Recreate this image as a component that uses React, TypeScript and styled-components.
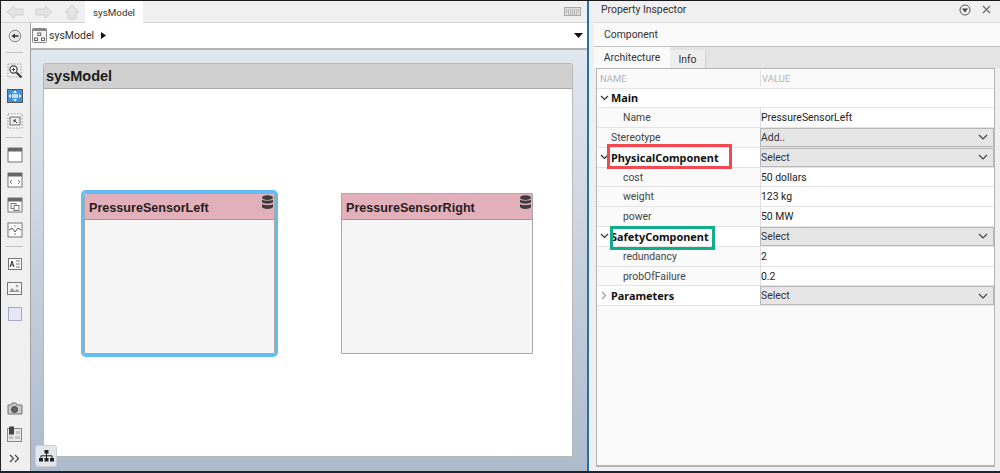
import React from "react";
import styled, { createGlobalStyle } from "styled-components";

const Global = createGlobalStyle`
  html, body { margin: 0; padding: 0; background: #111; }
  * { box-sizing: border-box; }
`;

const Page = styled.div`
  width: 1000px; height: 473px; overflow: hidden; display: flex;
  background: #f0f0f0; border-top: 1px solid #1a1a1a; border-left: 1px solid #222;
  border-bottom: 2px solid #1a2530;
  font-family: Roboto, "Noto Sans", sans-serif; font-size: 10.4px; color: #222;
`;
const LeftPane = styled.div`
  width: 588px; flex: none; display: flex; flex-direction: column;
  border-right: 2px solid #2a6ea6;
`;
const TabBar = styled.div`
  height: 22px; flex: none; display: flex; align-items: stretch; background: #f0f0f0;
  border-bottom: 1px solid #d4d4d4; padding-left: 5px;
`;
const NavIcons = styled.div`display: flex; align-items: center; gap: 11px; width: 79px;`;
const ModelTab = styled.div`
  width: 58px; background: #fff; display: flex; align-items: center; justify-content: center;
  font-size: 9.8px; margin-bottom: -1px; color: #333;
`;
const Keyboard = styled.div`margin-left: auto; margin-right: 6px; display: flex; align-items: center;`;
const Body = styled.div`flex: 1; display: flex; min-height: 0;`;
const ToolRail = styled.div`
  width: 30px; flex: none; display: flex; flex-direction: column; align-items: center;
  background: #f0f0f0; border-right: 1px solid #a0a0a0; padding-right: 2px;
`;
const Tool = styled.div`height: 25px; width: 100%; display: flex; align-items: center; justify-content: center; flex: none;`;
const RailRule = styled.div`width: 17px; height: 1px; background: #c4c4c4; margin: ${(p: { $m: string }) => p.$m}; flex: none;`;
const Spacer = styled.div`flex: 1;`;
const Main = styled.div`flex: 1; display: flex; flex-direction: column; min-width: 0;`;
const AddressBar = styled.div`
  height: 27px; flex: none; background: #fff; display: flex; align-items: center;
  padding: 0 4px 0 1px; gap: 2px; border-bottom: 2px solid #b4b4b4; font-size: 10.5px; color: #333;
`;
const Caret = styled.div`margin-left: auto; display: flex;`;
const Canvas = styled.div`
  flex: 1; min-height: 0; background: linear-gradient(#e1e7ef, #adbbcc); padding: 13px 14px 14px 12px; position: relative;
`;
const Sheet = styled.div`
  height: 100%; background: #fff; border: 1px solid #b8b8b8; border-radius: 3px 3px 0 0;
  display: flex; flex-direction: column;
`;
const SheetTitle = styled.div`
  height: 25px; flex: none; background: #d0d0d0; border-bottom: 1px solid #a8a8a8;
  font: bold 14.5px "Liberation Sans", Arial, sans-serif; color: #1a1a1a;
  display: flex; align-items: center; padding-left: 2px; padding-bottom: 1px;
`;
const Diagram = styled.div`flex: 1; position: relative;`;
const Block = styled.div<{ $x: number; $y: number; $w: number; $h: number; $sel?: boolean }>`
  position: absolute; left: ${(p) => p.$x}px; top: ${(p) => p.$y}px; width: ${(p) => p.$w}px; height: ${(p) => p.$h}px;
  background: #f5f5f5; display: flex; flex-direction: column;
  border: 1px solid #a8a8a8; border-radius: 1px;
  ${(p) => (p.$sel ? "outline: 3px solid #62bcf6; outline-offset: 0; border-radius: 2px; border-width: 1px;" : "")}
`;
const BlockHead = styled.div`
  height: 26px; flex: none; background: #e1b0ba; border-bottom: 1px solid #b58f97; position: relative;
  font: bold 12.6px "Liberation Sans", Arial, sans-serif; color: #2b1d20;
  display: flex; align-items: center; padding: 2px 0 0 4px;
`;
const BlockIcon = styled.div`position: absolute; right: 0; top: 1px; display: flex;`;
const HierButton = styled.div`
  position: absolute; left: 4px; bottom: 4px; width: 22px; height: 22px; border-radius: 3px;
  background: #e3e6ea; border: 1px solid #ccd0d5; display: flex; align-items: center; justify-content: center;
`;
const RightPane = styled.div`
  flex: 1; min-width: 0; display: flex; flex-direction: column; background: #f0f0f0; position: relative;
`;
const TitleBar = styled.div`
  height: 21px; flex: none; display: flex; align-items: center; padding: 0 9px 4px 12px; color: #333;
`;
const TitleActions = styled.div`margin-left: auto; display: flex; gap: 11px; align-items: center;`;
const CompRow = styled.div`
  height: 25px; flex: none; margin-left: 5px; background: #fafafa; display: flex; align-items: center;
  padding-left: 10px; border-top: 1px solid #dcdcdc; border-bottom: 1px solid #c4c4c4; color: #333;
`;
const Tabs = styled.div`
  height: 21px; flex: none; margin-left: 5px; background: #e4e4e4; display: flex; align-items: flex-end;
`;
const TabItem = styled.div<{ $active?: boolean }>`
  height: ${(p) => (p.$active ? 21 : 18)}px; width: ${(p) => (p.$active ? 76 : 36)}px;
  background: ${(p) => (p.$active ? "#fafafa" : "#eeeeee")}; display: flex; align-items: center; justify-content: center;
  color: #333; ${(p) => (p.$active ? "" : "border-right: 1px solid #d2d2d2;")}
`;
const Table = styled.div`
  flex: 1; margin: 0 5px 4px 7px; background: #fafafa; border: 1px solid #b4b4b4; border-bottom-width: 2px;
  display: flex; flex-direction: column;
`;
const Row = styled.div<{ $white?: boolean; $head?: boolean }>`
  height: ${(p) => (p.$head ? 19.5 : 19.8)}px; flex: none; display: grid; grid-template-columns: 163px 1fr; align-items: center;
  background: ${(p) => (p.$white ? "#fff" : "#fafafa")}; border-bottom: 1px solid #e4e4e4;
`;
const HeadCell = styled.div`color: #b4b4b4; font-size: 9.5px; padding-left: 3px; height: 100%; display: flex; align-items: center;`;
const HeadValue = styled(HeadCell)`padding-left: 1px; border-left: 1px solid #e2e2e2; height: 15px;`;
const NameCell = styled.div<{ $indent: number; $bold?: boolean }>`
  display: flex; align-items: center; height: 100%; padding-left: ${(p) => p.$indent}px;
  font-family: ${(p) => (p.$bold ? '"Noto Sans", sans-serif' : "inherit")};
  font-weight: ${(p) => (p.$bold ? 700 : 400)}; color: ${(p) => (p.$bold ? "#111" : "#444")};
  font-size: ${(p) => (p.$bold ? "10.9px" : "inherit")};
`;
const Chevron = styled.span`width: 14px; flex: none; display: flex; align-items: center; justify-content: center;`;
const ValueCell = styled.div`
  height: 100%; display: flex; align-items: center; background: #fff; color: #222; border-left: 1px solid #dedede;
`;
const SelectCell = styled.div`
  height: 100%; display: flex; align-items: center; padding: 0 5px 0 0; background: #e6e6e6; color: #333;
  border: 1px solid #b8b8b8; justify-content: space-between;
`;
const Callout = styled.div<{ $c: string; $x: number; $y: number; $w: number; $h: number }>`
  position: absolute; left: ${(p) => p.$x}px; top: ${(p) => p.$y}px; width: ${(p) => p.$w}px; height: ${(p) => p.$h}px;
  border: 3px solid ${(p) => p.$c}; pointer-events: none;
`;

const Back = ({ flip }: { flip?: boolean }) => (
  <svg width="18" height="14" viewBox="0 0 18 14" style={flip ? { transform: "scaleX(-1)" } : undefined}>
    <path d="M1 7 8 1v3h9v6H8v3z" fill="#e4e4e4" stroke="#cfcfcf" />
  </svg>
);
const Up = () => (
  <svg width="16" height="16" viewBox="0 0 16 16"><path d="M8 1 15 8h-3v7H4V8H1z" fill="#e4e4e4" stroke="#cfcfcf" /></svg>
);
const Frame = ({ children, dash }: { children?: React.ReactNode; dash?: boolean }) => (
  <svg width="16" height="16" viewBox="0 0 16 16">
    <rect x="1" y="1" width="14" height="14" fill="#fff" stroke={dash ? "#888" : "#777"} strokeDasharray={dash ? "1.5 1.5" : undefined} />
    {children}
  </svg>
);
const Db = ({ c = "#3c3c3c" }: { c?: string }) => (
  <svg width="13" height="15" viewBox="0 0 13 15">
    <ellipse cx="6.5" cy="2.6" rx="5.5" ry="2.4" fill={c} />
    <path d="M1 4.5c1 1.6 10 1.6 11 0v2.6c-1 2.2-10 2.2-11 0zM1 9c1 1.6 10 1.6 11 0v3c-1 2.6-10 2.6-11 0z" fill={c} />
  </svg>
);
const ChevDown = () => (
  <svg width="9" height="6" viewBox="0 0 9 6"><path d="M1 1l3.5 3.5L8 1" fill="none" stroke="#333" strokeWidth="1.2" /></svg>
);
const ChevRight = () => (
  <svg width="6" height="9" viewBox="0 0 6 9"><path d="M1 1l3.5 3.5L1 8" fill="none" stroke="#999" strokeWidth="1.2" /></svg>
);
const SelectArrow = () => (
  <svg width="10" height="6" viewBox="0 0 10 6"><path d="M1 1l4 4 4-4" fill="none" stroke="#444" strokeWidth="1.2" /></svg>
);

const Select = ({ label }: { label: string }) => (
  <SelectCell>{label}<SelectArrow /></SelectCell>
);

export default function App() {
  return (
    <Page>
      <Global />
      <LeftPane>
        <TabBar>
          <NavIcons><Back /><Back flip /><Up /></NavIcons>
          <ModelTab>sysModel</ModelTab>
          <Keyboard>
            <svg width="17" height="9" viewBox="0 0 17 9">
              <rect x="0.5" y="0.5" width="16" height="8" fill="#dedede" stroke="#aaa" />
              <path d="M2 3h13M2 5h13M4 7h9" stroke="#999" strokeDasharray="1 1" />
            </svg>
          </Keyboard>
        </TabBar>
        <Body>
          <ToolRail>
            <Tool>
              <svg width="14" height="14" viewBox="0 0 14 14">
                <circle cx="7" cy="7" r="5.8" fill="#e8e8e8" stroke="#888" />
                <path d="M3.5 7 7 4.5v1.7h3.5v1.6H7v1.7z" fill="#333" />
              </svg>
            </Tool>
            <RailRule $m="4px 0 5px" />
            <Tool>
              <svg width="16" height="16" viewBox="0 0 16 16">
                <rect x="1" y="1" width="13" height="13" fill="none" stroke="#999" strokeDasharray="1.5 1.5" />
                <circle cx="6.5" cy="6.5" r="3.6" fill="#fff" stroke="#444" strokeWidth="1.2" />
                <path d="M4.8 6.5h3.4M6.5 4.8v3.4" stroke="#444" />
                <path d="M9.5 9.5 14.5 14.5" stroke="#333" strokeWidth="1.8" />
              </svg>
            </Tool>
            <Tool>
              <svg width="16" height="14" viewBox="0 0 16 14">
                <rect x="0.5" y="0.5" width="15" height="13" fill="#3f93dc" stroke="#555" />
                <rect x="5" y="5" width="6" height="4" fill="#bcdcf4" />
                <path d="M8 1.5 6 4h4zM8 12.5 6 10h4zM1.5 7 4 5v4zM14.5 7 12 5v4z" fill="#fff" />
              </svg>
            </Tool>
            <Tool>
              <Frame dash>
                <rect x="3" y="4" width="10" height="8" fill="#eee" stroke="#666" />
                <path d="M7 7l3 3M7 7h2M7 7v2" stroke="#333" />
              </Frame>
            </Tool>
            <RailRule $m="4px 0 4px" />
            <Tool>
              <Frame><rect x="1" y="1" width="14" height="3.5" fill="#666" /></Frame>
            </Tool>
            <Tool>
              <Frame>
                <rect x="1" y="1" width="14" height="3.5" fill="#666" />
                <path d="M5 8 3 10l2 2M11 8l2 2-2 2" fill="none" stroke="#777" />
              </Frame>
            </Tool>
            <Tool>
              <Frame>
                <rect x="1" y="1" width="14" height="3.5" fill="#666" />
                <rect x="4" y="6.5" width="5" height="5" fill="none" stroke="#777" />
                <rect x="7" y="8.5" width="5" height="5" fill="#fff" stroke="#777" />
              </Frame>
            </Tool>
            <Tool>
              <Frame><path d="M2 8l3-2 3 4 3-4 3 2" fill="none" stroke="#555" /><path d="M8 3v2M8 11v2" stroke="#888" /></Frame>
            </Tool>
            <RailRule $m="4px 0 4px" />
            <Tool>
              <svg width="14" height="12" viewBox="0 0 14 12">
                <rect x="0.5" y="0.5" width="13" height="11" fill="#fff" stroke="#777" />
                <path d="M2 9 4 3l2 6M3 7h2" fill="none" stroke="#333" />
                <path d="M8 3h4M8 6h4M8 9h4" stroke="#777" />
              </svg>
            </Tool>
            <Tool>
              <svg width="15" height="13" viewBox="0 0 15 13">
                <rect x="0.5" y="0.5" width="14" height="12" fill="#f4f4f4" stroke="#777" />
                <path d="M2 10l3-4 3 3 2-2 3 3z" fill="#999" />
                <circle cx="10" cy="4" r="1.3" fill="#aaa" />
              </svg>
            </Tool>
            <Tool>
              <svg width="14" height="14" viewBox="0 0 14 14"><rect x="0.5" y="0.5" width="13" height="13" fill="#e6e6f6" stroke="#a8a8c0" /></svg>
            </Tool>
            <Spacer />
            <Tool>
              <svg width="16" height="13" viewBox="0 0 16 13">
                <path d="M1 3h3l1-2h4l1 2h5v9H1z" fill="#c8c8c8" stroke="#777" />
                <circle cx="7.5" cy="7.5" r="3" fill="#666" stroke="#444" />
              </svg>
            </Tool>
            <Tool>
              <svg width="15" height="16" viewBox="0 0 15 16">
                <rect x="0.5" y="2.5" width="14" height="13" fill="#e8e8e8" stroke="#888" />
                <rect x="2" y="0.5" width="5" height="8" fill="#444" />
                <path d="M9 5h4v3H9zM2 10h4v3H2zM8 10h5v3H8z" fill="#c4c4c4" />
              </svg>
            </Tool>
            <Tool>
              <svg width="11" height="9" viewBox="0 0 11 9"><path d="M1 1l3.5 3.5L1 8M6 1l3.5 3.5L6 8" fill="none" stroke="#444" strokeWidth="1.2" /></svg>
            </Tool>
          </ToolRail>
          <Main>
            <AddressBar>
              <svg width="15" height="15" viewBox="0 0 15 15">
                <rect x="0.5" y="0.5" width="14" height="14" rx="1" fill="#f4f4f4" stroke="#888" />
                <rect x="0.5" y="0.5" width="14" height="2.5" fill="#888" />
                <rect x="5.8" y="5" width="3" height="2.5" fill="#fff" stroke="#666" />
                <rect x="2.5" y="10" width="3" height="2.5" fill="#fff" stroke="#666" />
                <rect x="9.5" y="10" width="3" height="2.5" fill="#fff" stroke="#666" />
              </svg>
              <span>sysModel</span>
              <svg width="12" height="9" viewBox="0 0 12 9" style={{ marginLeft: 2 }}><path d="M3 1l5 3.5L3 8z" fill="#111" /></svg>
              <Caret><svg width="9" height="5" viewBox="0 0 9 5"><path d="M0 0h9L4.5 5z" fill="#111" /></svg></Caret>
            </AddressBar>
            <Canvas>
              <Sheet>
                <SheetTitle>sysModel</SheetTitle>
                <Diagram>
                  <Block $x={40} $y={104} $w={191} $h={161} $sel>
                    <BlockHead>
                      PressureSensorLeft
                      <BlockIcon><Db /></BlockIcon>
                    </BlockHead>
                  </Block>
                  <Block $x={297} $y={104} $w={192} $h={161}>
                    <BlockHead>
                      PressureSensorRight
                      <BlockIcon><Db /></BlockIcon>
                    </BlockHead>
                  </Block>
                </Diagram>
              </Sheet>
              <HierButton>
                <svg width="15" height="12" viewBox="0 0 15 12">
                  <rect x="5.5" y="0" width="4" height="3.5" fill="#222" />
                  <rect x="0" y="8" width="4" height="3.5" fill="#222" />
                  <rect x="5.5" y="8" width="4" height="3.5" fill="#222" />
                  <rect x="11" y="8" width="4" height="3.5" fill="#222" />
                  <path d="M7.5 3v5M2 8V5.8h11V8" fill="none" stroke="#222" />
                </svg>
              </HierButton>
            </Canvas>
          </Main>
        </Body>
      </LeftPane>
      <RightPane>
        <TitleBar>
          Property Inspector
          <TitleActions>
            <svg width="12" height="12" viewBox="0 0 12 12">
              <circle cx="6" cy="6" r="5" fill="none" stroke="#555" />
              <path d="M3 4.5h6L6 8.5z" fill="#444" />
            </svg>
            <svg width="9" height="9" viewBox="0 0 9 9"><path d="M1 1l7 7M8 1 1 8" stroke="#666" strokeWidth="1.1" /></svg>
          </TitleActions>
        </TitleBar>
        <CompRow>Component</CompRow>
        <Tabs>
          <TabItem $active>Architecture</TabItem>
          <TabItem>Info</TabItem>
        </Tabs>
        <Table>
          <Row $head><HeadCell>NAME</HeadCell><HeadValue>VALUE</HeadValue></Row>
          <Row $white><NameCell $indent={0} $bold><Chevron><ChevDown /></Chevron>Main</NameCell><div /></Row>
          <Row><NameCell $indent={26}>Name</NameCell><ValueCell>PressureSensorLeft</ValueCell></Row>
          <Row><NameCell $indent={14}>Stereotype</NameCell><Select label="Add.." /></Row>
          <Row $white><NameCell $indent={0} $bold><Chevron><ChevDown /></Chevron>PhysicalComponent</NameCell><Select label="Select" /></Row>
          <Row><NameCell $indent={26}>cost</NameCell><ValueCell>50 dollars</ValueCell></Row>
          <Row><NameCell $indent={26}>weight</NameCell><ValueCell>123 kg</ValueCell></Row>
          <Row><NameCell $indent={26}>power</NameCell><ValueCell>50 MW</ValueCell></Row>
          <Row $white><NameCell $indent={0} $bold><Chevron><ChevDown /></Chevron>SafetyComponent</NameCell><Select label="Select" /></Row>
          <Row><NameCell $indent={26}>redundancy</NameCell><ValueCell>2</ValueCell></Row>
          <Row><NameCell $indent={26}>probOfFailure</NameCell><ValueCell>0.2</ValueCell></Row>
          <Row $white><NameCell $indent={0} $bold><Chevron><ChevRight /></Chevron>Parameters</NameCell><Select label="Select" /></Row>
        </Table>
        <Callout $c="#f04a50" $x={18} $y={143} $w={125} $h={25} />
        <Callout $c="#10ac8c" $x={21} $y={225} $w={105} $h={24} />
      </RightPane>
    </Page>
  );
}
